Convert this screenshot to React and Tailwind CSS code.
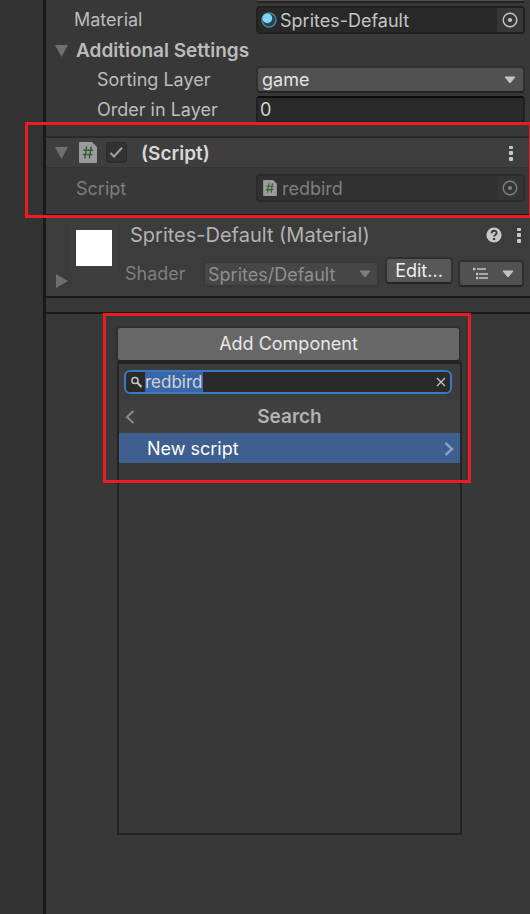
import { useEffect, useRef } from "react";

function Triangle({ right = false }) {
  return (
    <svg width="14" height="14" viewBox="0 0 14 14" className="shrink-0 text-[#6f6f6f]" aria-hidden="true">
      <path d={right ? "M2 0 L14 7 L2 14 Z" : "M1 1 H14 L7.5 13 Z"} fill="currentColor" />
    </svg>
  );
}

function Caret() {
  return (
    <svg width="12" height="8" viewBox="0 0 12 8" className="shrink-0" aria-hidden="true">
      <path d="M1 1 H11 L6 7 Z" fill="currentColor" stroke="currentColor" strokeWidth="1" strokeLinejoin="round" />
    </svg>
  );
}

function TargetIcon() {
  return (
    <svg width="16" height="16" viewBox="0 0 16 16" aria-hidden="true">
      <circle cx="8" cy="8" r="6.8" fill="none" stroke="currentColor" strokeWidth="1.4" />
      <circle cx="8" cy="8" r="2.1" fill="currentColor" />
    </svg>
  );
}

function MaterialIcon() {
  return (
    <svg width="16" height="16" viewBox="0 0 16 16" className="shrink-0" aria-hidden="true">
      <circle cx="8" cy="8" r="7" fill="#234451" stroke="#4d8499" strokeWidth="1.4" />
      <circle cx="6.3" cy="6.3" r="4.9" fill="#81d4fa" />
    </svg>
  );
}

function ScriptIcon({ className }) {
  return (
    <svg viewBox="0 0 18 21" className={className} aria-hidden="true">
      <path d="M1 0 H13 L18 5 V20 Q18 21 17 21 H1 Q0 21 0 20 V1 Q0 0 1 0 Z" fill="#9b9b9b" />
      <path d="M7.6 4.5 L5.8 16.5 M12.2 4.5 L10.4 16.5 M4.4 8.2 H14 M3.8 12.6 H13.4" fill="none" stroke="#355e35" strokeWidth="1.5" />
    </svg>
  );
}

function Dots() {
  return (
    <svg width="6" height="16" viewBox="0 0 6 16" aria-hidden="true">
      <rect x="1" y="1" width="4" height="3" rx="1" fill="#c8c8c8" />
      <rect x="1" y="6" width="4" height="4" rx="1" fill="#c8c8c8" />
      <rect x="1" y="12" width="4" height="4" rx="1" fill="#c8c8c8" />
    </svg>
  );
}

function ObjectField({ id, value, icon, disabled = false }) {
  return (
    <div
      className={
        disabled
          ? "flex h-7 min-w-0 items-stretch rounded border-2 border-[#2b2b2b] bg-[#313131] text-[#7f7f7f]"
          : "flex h-7 min-w-0 items-stretch rounded border-2 border-[#202020] bg-[#282828] text-[#c4c4c4]"
      }
    >
      <div className={disabled ? "flex items-center pl-[5px]" : "flex items-center pl-[3px]"}>{icon}</div>
      <input
        id={id}
        defaultValue={value}
        readOnly
        disabled={disabled}
        className={disabled ? "min-w-0 flex-1 bg-transparent pt-0.5 pl-[5px] outline-none" : "min-w-0 flex-1 bg-transparent pt-0.5 pl-[3px] outline-none"}
      />
      <button
        type="button"
        aria-label="Select object"
        disabled={disabled}
        className={disabled ? "flex w-[26px] items-center justify-center bg-[#353535]" : "flex w-[26px] items-center justify-center bg-[#373737]"}
      >
        <TargetIcon />
      </button>
    </div>
  );
}

function RendererSettings() {
  return (
    <section className="h-[136px] pr-[5px]">
      <div className="pl-[210px]">
        <div className="h-[3px] rounded-b border-b-2 border-[#242424] bg-[#515151]" />
      </div>
      <div className="mt-[3px] grid h-7 grid-cols-[210px_minmax(0,1fr)] items-center">
        <label htmlFor="material" className="pl-7">Material</label>
        <ObjectField id="material" value="Sprites-Default" icon={<MaterialIcon />} />
      </div>
      <button type="button" className="flex h-8 items-center gap-2 pt-0.5 pl-2 text-[19px] font-semibold">
        <Triangle />
        Additional Settings
      </button>
      <div className="grid h-[27px] grid-cols-[210px_minmax(0,1fr)] items-center">
        <label htmlFor="layer" className="pl-[51px]">Sorting Layer</label>
        <div className="grid items-center">
          <select id="layer" className="col-start-1 row-start-1 h-[27px] w-full appearance-none rounded border-2 border-[#303030] border-b-[#242424] bg-[#515151] pl-1 text-[#e4e4e4] outline-none">
            <option>game</option>
          </select>
          <span className="pointer-events-none col-start-1 row-start-1 mr-[9px] justify-self-end text-[#c4c4c4]"><Caret /></span>
        </div>
      </div>
      <div className="mt-[3px] grid h-[27px] grid-cols-[210px_minmax(0,1fr)] items-center">
        <label htmlFor="order" className="pl-[51px]">Order in Layer</label>
        <input id="order" defaultValue="0" className="h-[27px] w-full min-w-0 rounded border-2 border-[#212121] border-t-[#0d0d0d] bg-[#2a2a2a] pl-0.5 text-[#d2d2d2] outline-none" />
      </div>
    </section>
  );
}

function ScriptComponent() {
  return (
    <section className="relative border-t-2 border-[#292929]">
      <header className="flex h-[30px] items-center border-b border-[#343434] bg-[#3e3e3e] pr-4 pl-2">
        <Triangle />
        <ScriptIcon className="ml-[11px] h-[21px] w-[18px]" />
        <span className="ml-[9px] grid h-[21px] w-[21px] place-items-center">
          <input id="enabled" type="checkbox" defaultChecked className="peer col-start-1 row-start-1 h-[21px] w-[21px] appearance-none rounded border border-[#292929] bg-[#323232]" />
          <svg width="15" height="13" viewBox="0 0 15 13" className="pointer-events-none invisible col-start-1 row-start-1 peer-checked:visible" aria-hidden="true">
            <path d="M1.5 7 L5 10.5 L13 1.8" fill="none" stroke="#a2a2a2" strokeWidth="2" />
          </svg>
        </span>
        <label htmlFor="enabled" className="ml-3.5 pt-0.5 text-[19px] font-semibold text-[#d8d8d8]">(Script)</label>
        <button type="button" aria-label="Component menu" className="ml-auto"><Dots /></button>
      </header>
      <div className="grid h-[46px] grid-cols-[210px_minmax(0,1fr)] items-start pt-1.5 pr-[5px]">
        <label htmlFor="script" className="pt-[3px] pl-[30px] text-[#7f7f7f]">Script</label>
        <ObjectField id="script" value="redbird" disabled icon={<ScriptIcon className="h-4 w-3.5" />} />
      </div>
      <div className="pointer-events-none absolute -top-4 -right-0.5 -bottom-1 -left-[21px] z-10 border-3 border-[#ed1c24]" />
    </section>
  );
}

function MaterialSection() {
  return (
    <section className="flex h-[84px] border-t-2 border-b-2 border-[#1a1a1a] bg-[#3c3c3c] pr-1.5">
      <div className="flex w-[79px] shrink-0 flex-col items-start">
        <div className="mt-2 ml-6 border-6 border-[#3e3e3e]">
          <div className="h-9 w-9 bg-white" />
        </div>
        <button type="button" aria-label="Expand material" className="mt-0.5 ml-2"><Triangle right /></button>
      </div>
      <div className="min-w-0 flex-1">
        <div className="flex h-[38px] items-center pl-[5px]">
          <h2 className="text-[20px] whitespace-nowrap text-[#b2b2b2]">Sprites-Default (Material)</h2>
          <button type="button" aria-label="Help" className="ml-auto">
            <svg width="16" height="16" viewBox="0 0 16 16" aria-hidden="true">
              <circle cx="8" cy="8" r="7.6" fill="#c8c8c8" />
              <path d="M5.6 6.2 C5.6 3 10.6 3 10.6 6 C10.6 7.8 8.1 7.8 8.1 9.6" fill="none" stroke="#3c3c3c" strokeWidth="1.9" />
              <circle cx="8.1" cy="12" r="1.2" fill="#3c3c3c" />
            </svg>
          </button>
          <button type="button" aria-label="Material menu" className="mr-0.5 ml-3.5"><Dots /></button>
        </div>
        <div className="mt-[3px] flex items-start">
          <label htmlFor="shader" className="mt-[5px] w-[78px] text-[#7f7f7f]">Shader</label>
          <div className="mt-1 grid min-w-0 flex-1 items-center">
            <select id="shader" disabled className="col-start-1 row-start-1 h-[26px] w-full min-w-0 appearance-none rounded border-2 border-[#393939] bg-[#464646] pl-[3px] text-[#8f8f8f] opacity-100">
              <option>Sprites/Default</option>
            </select>
            <span className="pointer-events-none col-start-1 row-start-1 mr-2 justify-self-end text-[#7f7f7f]"><Caret /></span>
          </div>
          <button type="button" className="ml-1.5 h-[27px] w-[68px] rounded border-2 border-[#303030] border-b-[#242424] bg-[#585858] leading-[23px] text-[#eeeeee]">Edit...</button>
          <button type="button" aria-label="Presets" className="mt-[3px] ml-[5px] flex h-[27px] w-[66px] items-center justify-between rounded border-2 border-[#303030] border-b-[#242424] bg-[#515151] pr-2 pl-3 text-[#c4c4c4]">
            <svg width="17" height="13" viewBox="0 0 17 13" aria-hidden="true">
              <path d="M1 2 H3 M5 2 H14 M4 7 H6 M7 7 H16 M4 11 H6 M7 11 H16" stroke="currentColor" strokeWidth="1.4" />
              <path d="M1 .8 H3.4 V3.2 H1 Z M4 5.8 H6.2 V8.2 H4 Z M4 9.8 H6.2 V12.2 H4 Z" fill="currentColor" />
            </svg>
            <Caret />
          </button>
        </div>
      </div>
    </section>
  );
}

function AddComponent() {
  const search = useRef(null);
  useEffect(() => {
    search.current.focus();
    search.current.select();
  }, []);
  return (
    <section className="relative mx-auto w-[368px] pt-3 pr-[9px] pl-3.5">
      <div className="mr-px -ml-px">
        <button type="button" className="block h-9 w-full rounded border-2 border-[#303030] border-b-[#242424] bg-[#676767] text-[#e8e8e8]">Add Component</button>
      </div>
      <div className="h-[473px] border-2 border-[#232323]">
        <div className="bg-[#3c3c3c] pt-1.5 pr-2 pb-1.5 pl-[5px]">
          <div className="flex h-6 items-center rounded-md border-2 border-[#3a79bb] bg-[#2a2a2a] text-[#c4c4c4]">
            <svg width="19" height="12" viewBox="0 0 19 12" className="shrink-0" aria-hidden="true">
              <circle cx="9" cy="4.5" r="3.1" fill="none" stroke="currentColor" strokeWidth="1.5" />
              <path d="M11.3 6.8 L15.5 11" stroke="currentColor" strokeWidth="2" />
            </svg>
            <input ref={search} aria-label="Search components" defaultValue="redbird" className="h-5 min-w-0 flex-1 bg-transparent text-[17px] leading-5 outline-none selection:bg-[#3a66a8] selection:text-[#d2d2d2]" />
            <button type="button" aria-label="Clear search" className="mr-1">
              <svg width="10" height="10" viewBox="0 0 10 10" aria-hidden="true">
                <path d="M1 1 L9 9 M9 1 L1 9" stroke="currentColor" strokeWidth="1.3" />
              </svg>
            </button>
          </div>
        </div>
        <div className="grid h-[33px] grid-cols-[24px_1fr_24px] items-center bg-[#404040]">
          <button type="button" aria-label="Back" className="pl-1.5">
            <svg width="10" height="14" viewBox="0 0 10 14" aria-hidden="true">
              <path d="M8.5 1 L2 7 L8.5 13" fill="none" stroke="#8b8b8b" strokeWidth="2" />
            </svg>
          </button>
          <h3 className="text-center text-[19px] font-semibold text-[#b2b2b2]">Search</h3>
        </div>
        <button type="button" className="flex h-[30px] w-full items-center justify-between bg-[#3e5f8f] pt-0.5 pr-1.5 pl-7 text-white">
          New script
          <svg width="10" height="14" viewBox="0 0 10 14" aria-hidden="true">
            <path d="M1.5 1 L8 7 L1.5 13" fill="none" stroke="#8aa0c2" strokeWidth="2.4" />
          </svg>
        </button>
      </div>
      <div className="pointer-events-none absolute inset-x-0 -top-px z-10 h-[170px] border-3 border-[#ed1c24]" />
    </section>
  );
}

export default function App() {
  return (
    <div className="flex min-h-screen overflow-hidden bg-[#383838] font-['Inter',sans-serif] text-[18px] leading-6 text-[#bcbcbc]">
      <aside className="w-[46px] shrink-0 border-r-3 border-[#191919] bg-[#323232]" />
      <main className="min-w-0 flex-1">
        <RendererSettings />
        <ScriptComponent />
        <MaterialSection />
        <div className="h-3.5" />
        <div className="border-t-2 border-[#1a1a1a] pr-0.5">
          <AddComponent />
        </div>
      </main>
    </div>
  );
}
